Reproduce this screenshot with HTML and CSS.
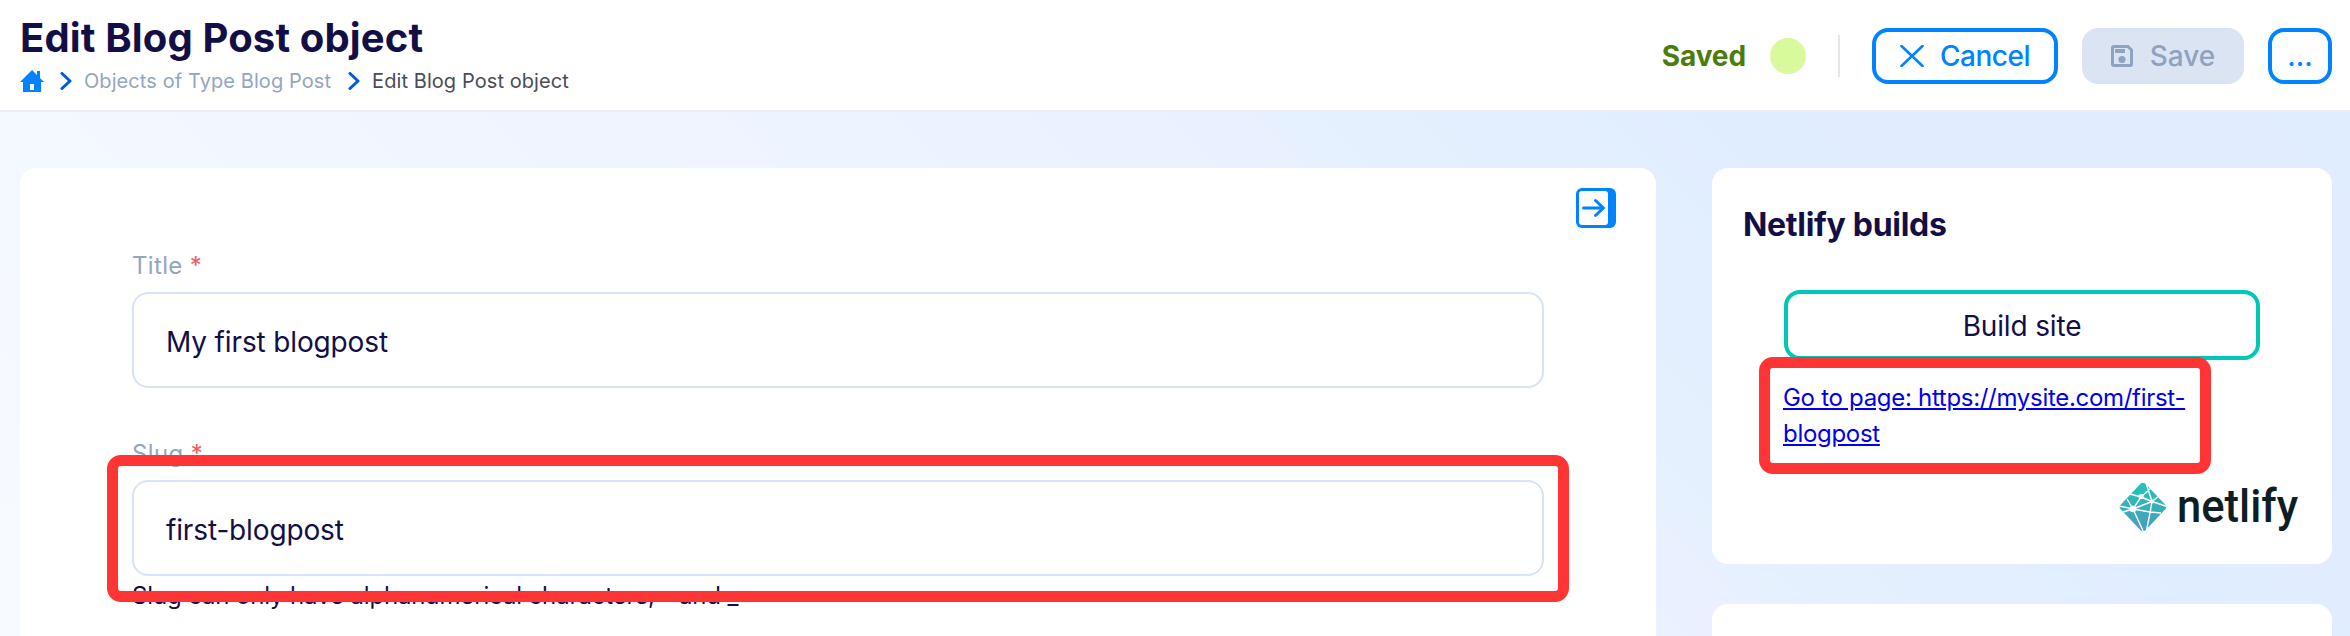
FILE: index.html
```html
<!DOCTYPE html>
<html lang="en">
<head>
<meta charset="utf-8">
<title>Edit Blog Post object</title>
<link rel="stylesheet" href="styles.css">
</head>
<body>
<header class="topbar">
  <div class="heading">
    <h1 class="title"><span>Edit Blog Post object</span></h1>
    <nav class="crumbs">
      <svg class="home" width="24" height="22" viewBox="0 0 24 22"><path fill="#0083ff" d="M12 0l5 5V1h3v7l4 4h-3v10H3V12H0z"/><path fill="#fff" d="M10 14h4v6h-4z"/></svg>
      <svg class="chev" width="12" height="18" viewBox="0 0 12 18"><path d="M2 1.500L10 9l-8 7.500"/></svg>
      <span class="crumb-link">Objects of Type Blog Post</span>
      <svg class="chev" width="12" height="18" viewBox="0 0 12 18"><path d="M2 1.500L10 9l-8 7.500"/></svg>
      <span class="crumb-current">Edit Blog Post object</span>
    </nav>
  </div>
  <div class="actions">
    <span class="saved">Saved</span>
    <span class="dot"></span>
    <span class="divider"></span>
    <button class="btn cancel"><svg width="24" height="22" viewBox="0 0 24 22"><path d="M1.500 1l21 20M22.500 1l-21 20" stroke="#0083ff" stroke-width="2.600" stroke-linecap="round"/></svg><span>Cancel</span></button>
    <button class="btn save"><svg width="22" height="22" viewBox="0 0 22 22" fill="none"><path d="M1.500 3q0-1.500 1.500-1.500h14L20.500 5v14q0 1.500-1.500 1.500H3q-1.500 0-1.500-1.500z" stroke="#8fa2bf" stroke-width="3"/><path d="M4 4h10v4H4z" fill="#8fa2bf"/><circle cx="11" cy="14.500" r="3.600" fill="#8fa2bf"/></svg><span>Save</span></button>
    <button class="btn more">...</button>
  </div>
</header>
<main class="content">
  <section class="card form">
    <svg class="collapse" width="40" height="40" viewBox="0 0 40 40" fill="none"><rect width="40" height="40" rx="6" fill="#0083ff"/><rect x="3" y="3" width="29" height="34" rx="3" fill="#fff"/><path d="M7.500 20H27M19.500 12.500L27.500 20l-8 7.500" stroke="#0083ff" stroke-width="3" stroke-linecap="round" stroke-linejoin="round"/></svg>
    <div class="field">
      <label class="label">Title <span class="req">*</span></label>
      <div class="input">My first blogpost</div>
    </div>
    <div class="field">
      <label class="label">Slug <span class="req">*</span></label>
      <div class="input">first-blogpost</div>
      <p class="hint">Slug can only have alphanumerical characters, - and _</p>
      <span class="mark mark-slug"></span>
    </div>
  </section>
  <aside class="side">
    <section class="card builds">
      <h2 class="builds-title">Netlify builds</h2>
      <button class="build">Build site</button>
      <div class="go"><a class="link" href="#">Go to page: https://mysite.com/first-blogpost</a><span class="mark mark-link"></span></div>
      <svg class="logo" width="190" height="64" viewBox="0 0 190 64">
        <defs><linearGradient id="g" x1="0" y1="0" x2="0" y2="1"><stop offset="0" stop-color="#20c6b7"/><stop offset="1" stop-color="#4d9abf"/></linearGradient></defs>
        <path fill="url(#g)" d="M21.500 6.800q2.500-2.300 5 0l20.300 21.400q1.300 1.800 0 3.500L26.500 53.200q-2.500 2.300-5 0L1.200 31.700q-1.300-1.700 0-3.500z"/>
        <g stroke="#fff" stroke-width="1.400" fill="none"><path d="M11 17l11 3 11 4.500 15 5M32 11L22 20 14 32 0 29M40 19l-7 5.500L31 36l-4 20M33 24.500L14 32M14 32l17 3 11 1M14 32L8 22M14 32L4 35M14 32l11 24M33 24.500L27 6"/></g>
        <g fill="#fff"><circle cx="14" cy="32" r="3.300"/><circle cx="22" cy="19.500" r="2.600"/><circle cx="33" cy="24.500" r="2"/></g>
        <text class="logo-text" x="58" y="44.500" textLength="121" lengthAdjust="spacingAndGlyphs">netlify</text>
      </svg>
    </section>
    <section class="card next"></section>
  </aside>
</main>
</body>
</html>
```
FILE: styles.css
```css
* { box-sizing: border-box; }
body { margin: 0; height: 636px; overflow: hidden; display: flex; flex-direction: column; font-family: Inter, "Liberation Sans", sans-serif; color: #130f46; background: #fff; }
h1, h2, p { margin: 0; }
button { font-family: inherit; background: #fff; }
svg { flex: none; display: block; }
.topbar { height: 112px; flex: none; display: flex; justify-content: space-between; padding: 0 18px 0 20px; background: #fff; border-bottom: 2px solid #ededf3; }
.heading { display: flex; flex-direction: column; }
.title { font-size: 40px; line-height: 48px; font-weight: 700; margin-top: 14px; white-space: nowrap; letter-spacing: 0.14px; }
.crumbs { display: flex; align-items: center; height: 24px; margin-top: 7px; font-size: 20px; line-height: 24px; white-space: nowrap; letter-spacing: 0.08px; }
.home { margin-top: -1px; margin-right: 16px; }
.chev { fill: none; stroke: #0059d6; stroke-width: 3; stroke-linecap: round; stroke-linejoin: round; }
.crumb-link { color: #94a5bf; margin: 0 17px 0 12px; }
.crumb-current { color: #4c4c57; margin-left: 12px; }
.actions { display: flex; align-items: center; height: 112px; }
.saved { color: #4a7d0c; font-weight: 700; font-size: 28px; letter-spacing: -0.1px; margin-right: 24px; }
.dot { width: 36px; height: 36px; border-radius: 50%; background: #d8fa9c; margin-right: 32px; }
.divider { width: 2px; height: 42px; background: #e6e6ea; margin-right: 32px; }
.btn { height: 56px; padding: 0; border-radius: 16px; border: 4px solid #0083ff; color: #0083ff; font-size: 28px; font-weight: 500; display: flex; align-items: center; justify-content: center; gap: 16px; }
.cancel { width: 186px; margin-right: 24px; letter-spacing: -0.5px; }
.save { width: 162px; margin-right: 24px; background: #dbe4f3; border-color: #dbe4f3; color: #8fa2bf; gap: 17px; }
.more { width: 64px; }
.content { flex: 1; min-height: 0; overflow: hidden; display: flex; align-items: stretch; gap: 56px; padding: 56px 18px 0 20px; background: linear-gradient(45deg, #f7faff 0%, #f4f8ff 18%, #eaf0ff 61%, #e6f1fe 63%, #e0edfe 78%, #e0ecff 100%); }
.card { background: #fff; border-radius: 16px; }
.form { width: 1636px; flex: none; height: 500px; padding: 20px 112px 0; display: flex; flex-direction: column; }
.collapse { align-self: flex-end; margin-right: -72px; }
.field { position: relative; margin-bottom: 50px; }
.form .field:nth-of-type(1) { margin-top: 22px; }
.label { display: block; height: 42px; line-height: 32px; font-size: 24px; color: #94a5bf; letter-spacing: 0.35px; }
.req { color: #f15b5b; }
.input { height: 96px; border: 2px solid #d9e3f3; border-radius: 16px; padding: 3px 32px 0; display: flex; align-items: center; font-size: 28px; letter-spacing: -0.14px; }
.hint { font-size: 24px; line-height: 30px; margin-top: 5px; letter-spacing: -0.14px; }
.mark { position: absolute; border: 11px solid #ff3535; border-radius: 14px; pointer-events: none; }
.mark-slug { left: -25px; top: 17px; width: 1462px; height: 147px; }
.side { flex: 1; display: flex; flex-direction: column; gap: 40px; }
.builds { height: 396px; flex: none; padding: 37px 32px 0; display: flex; flex-direction: column; }
.builds-title { font-size: 32px; line-height: 40px; font-weight: 700; letter-spacing: -0.3px; margin-left: -1px; }
.build { width: 476px; height: 70px; flex: none; margin: 45px 0 0 40px; padding: 2px 0 0; border: 4px solid #00c7b7; border-radius: 16px; color: #130f46; font-size: 28px; letter-spacing: -0.16px; }
.go { position: relative; margin: 20px 0 0 39px; width: 420px; height: 72px; }
.link { color: #0000ee; font-size: 24px; line-height: 36px; letter-spacing: -0.3px; }
.mark-link { left: -24px; top: -23px; width: 452px; height: 117px; }
.logo { align-self: flex-end; margin-top: 25px; margin-right: -9px; }
.logo-text { font-family: Roboto, sans-serif; font-weight: 500; font-size: 46px; fill: #0e1e25; }
.next { height: 200px; flex: none; }
```
